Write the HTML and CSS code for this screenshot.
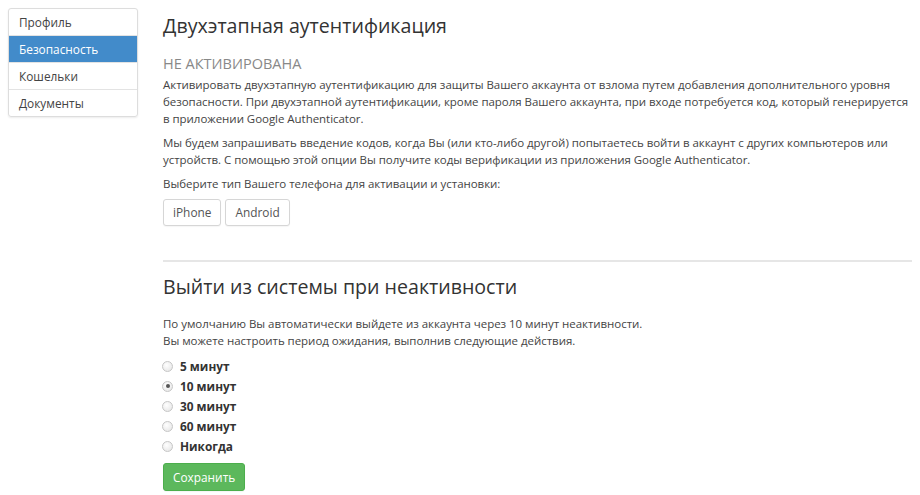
FILE: index.html
```html
<!DOCTYPE html>
<html lang="ru">
<head>
    <meta charset="UTF-8">
    <title>Безопасность</title>
    <link rel="stylesheet" href="styles.css">
</head>
<body>
    <div class="page">
        <ul class="side-nav">
            <li><a href="#">Профиль</a></li>
            <li class="active"><a href="#">Безопасность</a></li>
            <li><a href="#">Кошельки</a></li>
            <li><a href="#">Документы</a></li>
        </ul>

        <div class="content">
            <h2 class="title">Двухэтапная аутентификация</h2>
            <h4 class="status">НЕ АКТИВИРОВАНА</h4>
            <p>Активировать двухэтапную аутентификацию для защиты Вашего аккаунта от взлома путем добавления дополнительного уровня безопасности. При двухэтапной аутентификации, кроме пароля Вашего аккаунта, при входе потребуется код, который генерируется в приложении Google Authenticator.</p>
            <p>Мы будем запрашивать введение кодов, когда Вы (или кто-либо другой) попытаетесь войти в аккаунт с других компьютеров или устройств. С помощью этой опции Вы получите коды верификации из приложения Google Authenticator.</p>
            <p>Выберите тип Вашего телефона для активации и установки:</p>
            <div class="phones">
                <button class="btn">iPhone</button>
                <button class="btn">Android</button>
            </div>

            <hr>

            <h2 class="title second">Выйти из системы при неактивности</h2>
            <p class="timeout-text">По умолчанию Вы автоматически выйдете из аккаунта через 10 минут неактивности.<br>
            Вы можете настроить период ожидания, выполнив следующие действия.</p>

            <form class="timeout">
                <label class="radio"><input type="radio" name="t"> 5 минут</label>
                <label class="radio"><input type="radio" name="t" checked> 10 минут</label>
                <label class="radio"><input type="radio" name="t"> 30 минут</label>
                <label class="radio"><input type="radio" name="t"> 60 минут</label>
                <label class="radio"><input type="radio" name="t"> Никогда</label>
                <button type="button" class="btn btn-success">Сохранить</button>
            </form>
        </div>
    </div>
</body>
</html>
```

FILE: styles.css
```css
* {
    box-sizing: border-box;
}

body {
    margin: 0;
    padding: 8px;
    font-family: "Open Sans", Arial, sans-serif;
    font-size: 11.5px;
    letter-spacing: -0.04px;
    line-height: 17px;
    color: #444;
    background: #fff;
}

.page {
    display: flex;
    gap: 25px;
}

.side-nav {
    list-style: none;
    margin: 0;
    padding: 0;
    width: 130px;
    flex-shrink: 0;
    align-self: flex-start;
    border: 1px solid #ddd;
    border-radius: 3px;
    box-shadow: 0 1px 2px rgba(0, 0, 0, 0.08);
    overflow: hidden;
    font-size: 11.85px;
    letter-spacing: 0;
}

.side-nav li {
    border-top: 1px solid #e3e3e3;
}

.side-nav li:first-child {
    border-top: none;
}

.side-nav a {
    display: block;
    padding: 5px 10px 4px;
    color: #444;
    text-decoration: none;
}

.side-nav .active a {
    background: #428bca;
    color: #fff;
}

.content {
    flex: 1;
}

.title {
    margin: 6px 0 0;
    font-size: 19.6px;
    letter-spacing: 0;
    line-height: 24px;
    font-weight: 400;
    color: #333;
}

.status {
    margin: 16px 0 2px;
    font-size: 14.5px;
    letter-spacing: 0;
    line-height: 20px;
    font-weight: 400;
    color: #888;
}

p {
    margin: 0 0 7px;
}

.phones {
    display: flex;
    gap: 4px;
    margin-top: 4px;
}

.btn {
    font-family: inherit;
    font-size: 11.85px;
    letter-spacing: 0;
    line-height: 17px;
    padding: 4px 9px;
    height: 27px;
    background: #fff;
    color: #555;
    border: 1px solid #d6d6d6;
    border-radius: 3px;
    box-shadow: 0 1px 1px rgba(0, 0, 0, 0.04);
    cursor: pointer;
}

hr {
    margin: 34px 0 0;
    border: none;
    border-top: 2px solid #e6e6e6;
}

.title.second {
    margin-top: 13px;
}

.timeout-text {
    margin: 16px 0 7px;
}

.timeout {
    display: flex;
    flex-direction: column;
    align-items: flex-start;
}

.radio {
    display: flex;
    align-items: center;
    gap: 7px;
    height: 20px;
    font-size: 11.85px;
    letter-spacing: 0;
    font-weight: 700;
    color: #333;
}

.radio input {
    appearance: none;
    margin: 0 0 0 -1px;
    width: 11px;
    height: 11px;
    border: 1px solid #c6c6c6;
    border-radius: 50%;
    background: radial-gradient(circle at 40% 35%, #fff, #e2e2e2);
    position: relative;
}

.radio input:checked::after {
    content: "";
    position: absolute;
    left: 2.5px;
    top: 2.5px;
    width: 4px;
    height: 4px;
    border-radius: 50%;
    background: #555;
}

.btn-success {
    margin-top: 7px;
    padding: 4px 9px;
    height: 28px;
    background: #5cb85c;
    border-color: #4cae4c;
    color: #fff;
}
```
